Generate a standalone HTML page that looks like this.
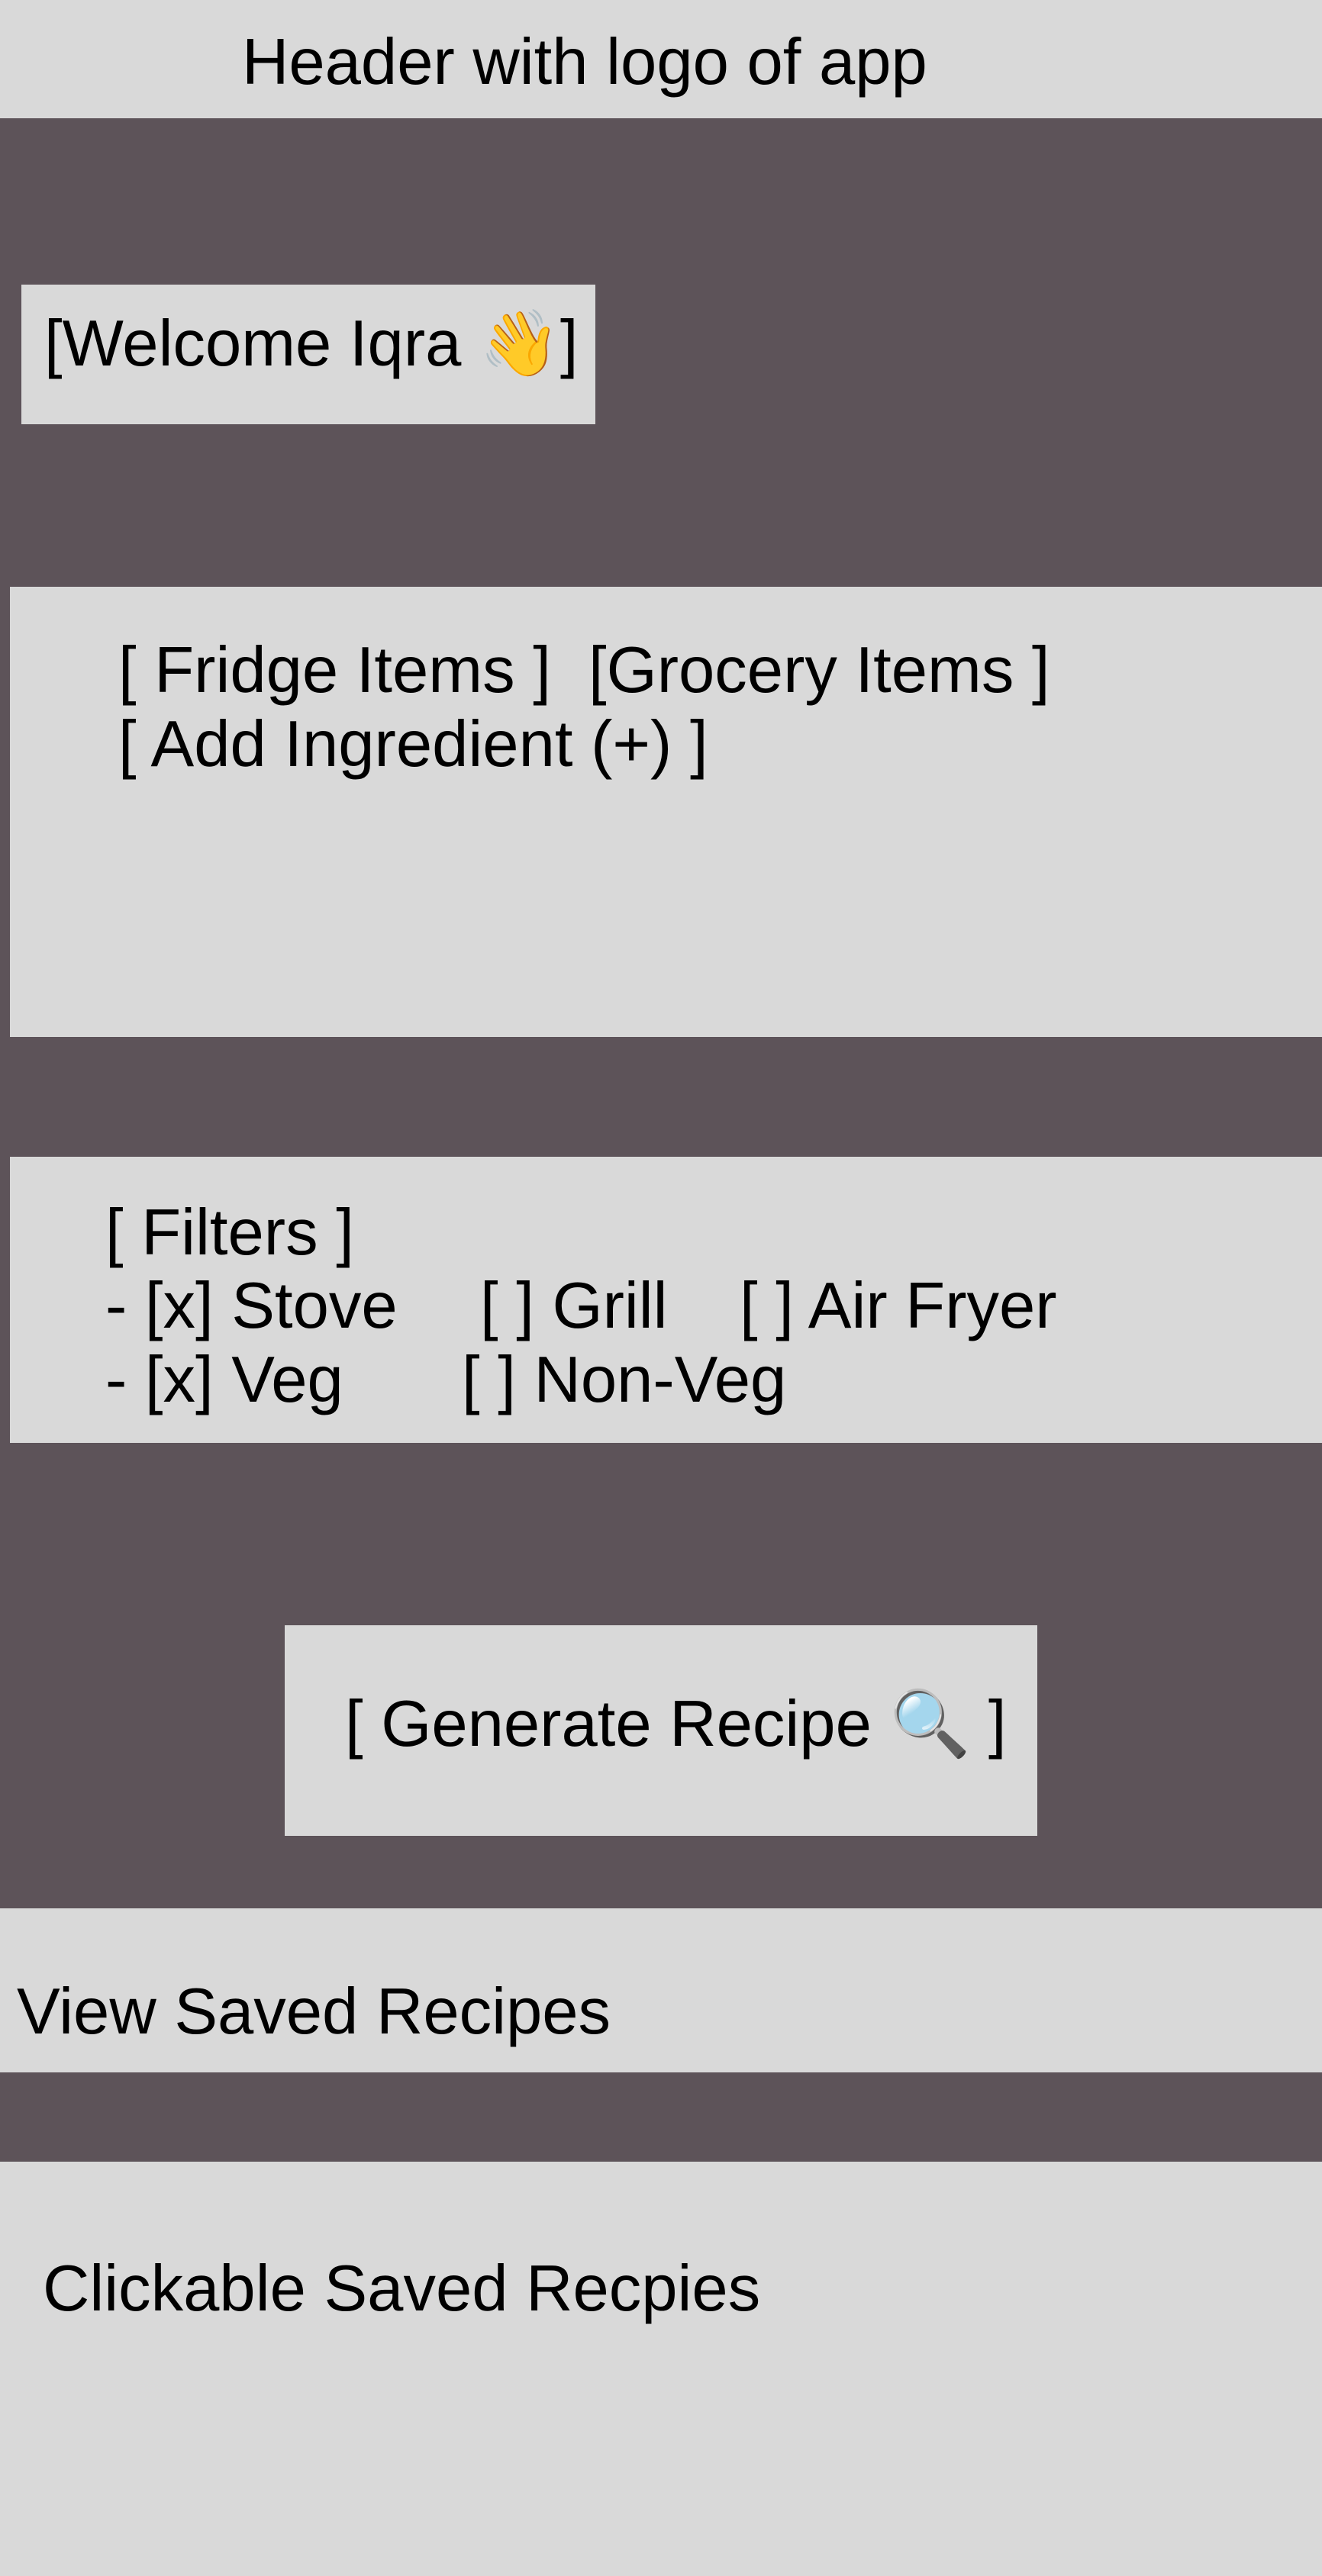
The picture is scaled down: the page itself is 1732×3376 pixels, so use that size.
<!DOCTYPE html>
<html><head><meta charset="utf-8"><style>
html,body{margin:0;padding:0}
body{width:1732px;height:3376px;position:relative;background:#5d5359;overflow:hidden;font-family:"Liberation Sans","Noto Sans CJK JP",sans-serif;color:#000}
.b{position:absolute;background:#d9d9d9}
.t{position:absolute;font-size:85px;line-height:96px;white-space:pre}
</style></head><body>
<div class="b" style="left:0;top:0;width:1732px;height:155px"></div>
<div class="t" style="left:317px;top:34px">Header with logo of app</div>

<div class="b" style="left:28px;top:373px;width:752px;height:183px"></div>
<div class="t" style="left:58px;top:403px">[Welcome Iqra 👋]</div>

<div class="b" style="left:13px;top:769px;width:1719px;height:590px"></div>
<div class="t" style="left:155px;top:831px">[ Fridge Items ]</div>
<div class="t" style="left:771px;top:831px">[Grocery Items ]</div>
<div class="t" style="left:155px;top:928px">[ Add Ingredient (+) ]</div>

<div class="b" style="left:13px;top:1516px;width:1719px;height:375px"></div>
<div class="t" style="left:138px;top:1568px">[ Filters ]</div>
<div class="t" style="left:138px;top:1664px">- [x] Stove</div>
<div class="t" style="left:629px;top:1664px">[ ] Grill</div>
<div class="t" style="left:969px;top:1664px">[ ] Air Fryer</div>
<div class="t" style="left:138px;top:1761px">- [x] Veg</div>
<div class="t" style="left:605px;top:1761px">[ ] Non-Veg</div>

<div class="b" style="left:373px;top:2130px;width:986px;height:276px"></div>
<div class="t" style="left:452px;top:2212px">[ Generate Recipe 🔍 ]</div>

<div class="b" style="left:0;top:2501px;width:1732px;height:215px"></div>
<div class="t" style="left:22px;top:2589px">View Saved Recipes</div>

<div class="b" style="left:0;top:2833px;width:1732px;height:543px"></div>
<div class="t" style="left:56px;top:2952px">Clickable Saved Recpies</div>
</body></html>
